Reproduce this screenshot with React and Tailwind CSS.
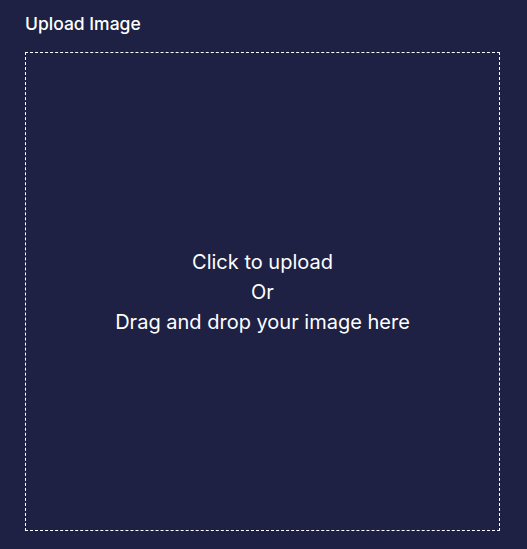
export default function App() {
  return (
    <div
      className="min-h-screen w-full bg-[#1e2143] px-[25px] pt-[12px] pb-[18px] text-white"
      style={{ fontFamily: 'Inter, "Noto Sans", sans-serif' }}
    >
      <h2 className="text-[17.5px] font-medium leading-[24px]">Upload Image</h2>
      <label className="mt-[16px] flex h-[479px] w-[475px] cursor-pointer flex-col items-center justify-center border border-dashed border-white text-center text-[20px] leading-[30px]">
        <span>Click to upload</span>
        <span>Or</span>
        <span>Drag and drop your image here</span>
        <input type="file" accept="image/*" className="hidden" />
      </label>
    </div>
  );
}
